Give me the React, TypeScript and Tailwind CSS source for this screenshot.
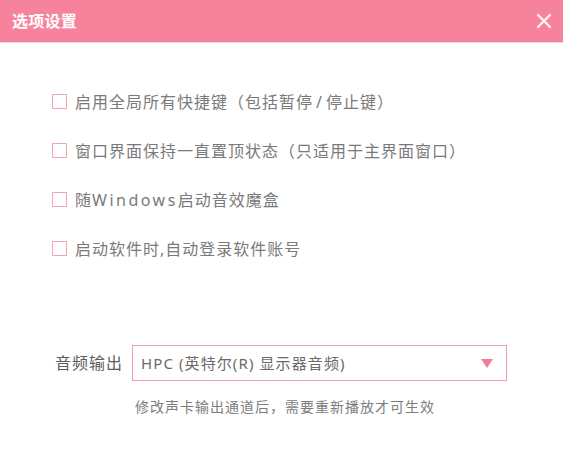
import React from "react";

const FONT = { fontFamily: '"Noto Sans","Noto Sans CJK SC",sans-serif' };

function Row({ children }: { children: React.ReactNode }) {
  return (
    <div className="flex h-[49px] items-center">
      <div className="h-[15px] w-[15px] shrink-0 border-[1.5px] border-[#f3a5b7] bg-white" />
      <div className="ml-[8px] text-[16px] tracking-[1px] leading-none text-[#7a7a7a]">{children}</div>
    </div>
  );
}

export default function App() {
  return (
    <div className="relative h-[457px] w-[563px] overflow-hidden bg-white" style={FONT}>
      <div className="flex h-[43px] items-center justify-between border-b border-[#fbd0da] bg-[#f6839b] pl-[12px] pr-[10px]">
        <div className="text-[16px] font-bold tracking-[0.25px] text-white">选项设置</div>
        <svg width="16" height="16" viewBox="0 0 16 16" className="mr-[1px]">
          <path d="M2 2 L14 14 M14 2 L2 14" stroke="#fff4f6" strokeWidth="2.4" strokeLinecap="round" />
        </svg>
      </div>
      <div className="flex flex-col pl-[52px] pt-[34px]">
        <Row>启用全局所有快捷键（包括暂停<span className="px-[3px]">/</span>停止键）</Row>
        <Row>窗口界面保持一直置顶状态（只适用于主界面窗口）</Row>
        <Row>
          随<span className="tracking-[2.5px]">Windows</span>启动音效魔盒
        </Row>
        <Row>启动软件时,自动登录软件账号</Row>
      </div>
      <div className="mt-[72px] flex items-center pl-[55px]">
        <div className="w-[77px] text-[16px] tracking-[1px] text-[#5c5c5c]">音频输出</div>
        <div className="flex h-[36px] w-[375px] items-center justify-between border border-[#f19db0] pl-[8px] pr-[13px]">
          <span className="text-[15px] tracking-[1.1px] text-[#6a6a6a]">HPC (英特尔(R) 显示器音频)</span>
          <svg width="12" height="9" viewBox="0 0 12 9">
            <polygon points="0,0 12,0 6,9" fill="#f07e98" />
          </svg>
        </div>
      </div>
      <div className="mt-[16px] pl-[135px] text-[14px] leading-[20px] tracking-[1px] text-[#7d7d7d]">
        修改声卡输出通道后，需要重新播放才可生效
      </div>
    </div>
  );
}
